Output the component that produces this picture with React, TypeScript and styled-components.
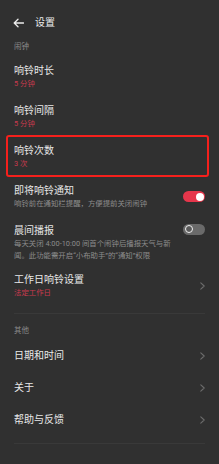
import React from "react";
import styled, { createGlobalStyle } from "styled-components";

const Global = createGlobalStyle`
  html, body { margin: 0; padding: 0; background: #303030; }
  body {
    font-family: Roboto, "Noto Sans CJK SC", "Noto Sans", sans-serif;
    -webkit-font-smoothing: antialiased;
  }
`;

const Page = styled.div`
  width: 219px;
  min-height: 464px;
  background: #303030;
  color: #e8e8e8;
  display: flex;
  flex-direction: column;
`;

const Header = styled.div`
  display: flex;
  align-items: center;
  height: 36px;
  margin-top: 5px;
  padding-left: 13px;
  gap: 11px;
`;

const Title = styled.div`
  font-size: 10px;
  line-height: 14px;
  color: #ececec;
`;

const SectionLabel = styled.div<{ $top?: number }>`
  font-size: 7.5px;
  line-height: 12px;
  color: #8a8a8a;
  padding: 0 14px 3px;
  margin-top: ${(p) => p.$top ?? 0}px;
`;

const Row = styled.div<{ $pt?: number; $pb?: number; $marked?: boolean }>`
  position: relative;
  display: flex;
  align-items: center;
  gap: 8px;
  padding: ${(p) => p.$pt ?? 7.5}px 14px ${(p) => p.$pb ?? 6.5}px;
  &::after {
    content: "";
    display: ${(p) => (p.$marked ? "block" : "none")};
    position: absolute;
    top: -1px;
    bottom: -1px;
    left: 6px;
    right: 10px;
    border: 2px solid #f5201c;
    border-radius: 3px;
    pointer-events: none;
  }
`;

const TextCol = styled.div`
  flex: 1;
  min-width: 0;
  display: flex;
  flex-direction: column;
`;

const ItemTitle = styled.div`
  font-size: 10px;
  line-height: 14px;
  color: #e8e8e8;
  white-space: nowrap;
`;

const Sub = styled.div<{ $red?: boolean }>`
  font-size: 7.4px;
  line-height: 12px;
  color: ${(p) => (p.$red ? "#c93a4e" : "#8c8c8c")};
  white-space: nowrap;
`;

const Toggle = styled.div<{ $on?: boolean; $top?: boolean }>`
  flex: none;
  width: 22px;
  height: 11px;
  border-radius: 6px;
  background: ${(p) => (p.$on ? "#e5364b" : "#6a6a6a")};
  display: flex;
  align-items: center;
  justify-content: ${(p) => (p.$on ? "flex-end" : "flex-start")};
  padding: 0 1.5px;
  box-sizing: border-box;
  align-self: ${(p) => (p.$top ? "flex-start" : "center")};
`;

const Knob = styled.div<{ $on?: boolean }>`
  width: 8px;
  height: 8px;
  border-radius: 50%;
  box-sizing: border-box;
  background: ${(p) => (p.$on ? "#ffffff" : "#5a5a5a")};
  border: ${(p) => (p.$on ? "none" : "1.6px solid #f2f2f2")};
`;

const Divider = styled.div<{ $top: number }>`
  height: 1px;
  background: #393939;
  margin: ${(p) => p.$top}px 14px 0;
`;

const BackArrow = () => (
  <svg width="11" height="10" viewBox="0 0 11 10" fill="none">
    <path d="M10.5 5H1.2M5 1.2L1.2 5L5 8.8" stroke="#ececec" strokeWidth="1.3" strokeLinecap="round" strokeLinejoin="round" />
  </svg>
);

const Chevron = () => (
  <svg width="5" height="8" viewBox="0 0 5 8" fill="none" style={{ flex: "none" }}>
    <path d="M0.8 0.8L4.2 4L0.8 7.2" stroke="#6c6c6c" strokeWidth="1.1" strokeLinecap="round" strokeLinejoin="round" />
  </svg>
);

export default function App() {
  return (
    <>
      <Global />
      <Page>
        <Header>
          <BackArrow />
          <Title>设置</Title>
        </Header>

        <SectionLabel>闹钟</SectionLabel>

        <Row>
          <TextCol>
            <ItemTitle>响铃时长</ItemTitle>
            <Sub $red>5 分钟</Sub>
          </TextCol>
        </Row>
        <Row>
          <TextCol>
            <ItemTitle>响铃间隔</ItemTitle>
            <Sub $red>5 分钟</Sub>
          </TextCol>
        </Row>
        <Row $marked>
          <TextCol>
            <ItemTitle>响铃次数</ItemTitle>
            <Sub $red>3 次</Sub>
          </TextCol>
        </Row>
        <Row>
          <TextCol>
            <ItemTitle>即将响铃通知</ItemTitle>
            <Sub>响铃前在通知栏提醒，方便提前关闭闹钟</Sub>
          </TextCol>
          <Toggle $on>
            <Knob $on />
          </Toggle>
        </Row>
        <Row $pb={4}>
          <TextCol>
            <ItemTitle>晨间播报</ItemTitle>
            <Sub>
              每天关闭 4:00-10:00 间首个闹钟后播报天气与新
              <br />
              闻。此功能需开启“小布助手”的“通知”权限
            </Sub>
          </TextCol>
          <Toggle $top>
            <Knob />
          </Toggle>
        </Row>
        <Row>
          <TextCol>
            <ItemTitle>工作日响铃设置</ItemTitle>
            <Sub $red>法定工作日</Sub>
          </TextCol>
          <Chevron />
        </Row>

        <Divider $top={7.5} />

        <SectionLabel $top={11}>其他</SectionLabel>

        <Row $pt={9} $pb={9}>
          <TextCol>
            <ItemTitle>日期和时间</ItemTitle>
          </TextCol>
          <Chevron />
        </Row>
        <Row $pt={9} $pb={9}>
          <TextCol>
            <ItemTitle>关于</ItemTitle>
          </TextCol>
          <Chevron />
        </Row>
        <Row $pt={9} $pb={9}>
          <TextCol>
            <ItemTitle>帮助与反馈</ItemTitle>
          </TextCol>
          <Chevron />
        </Row>

        <Divider $top={7} />
      </Page>
    </>
  );
}
